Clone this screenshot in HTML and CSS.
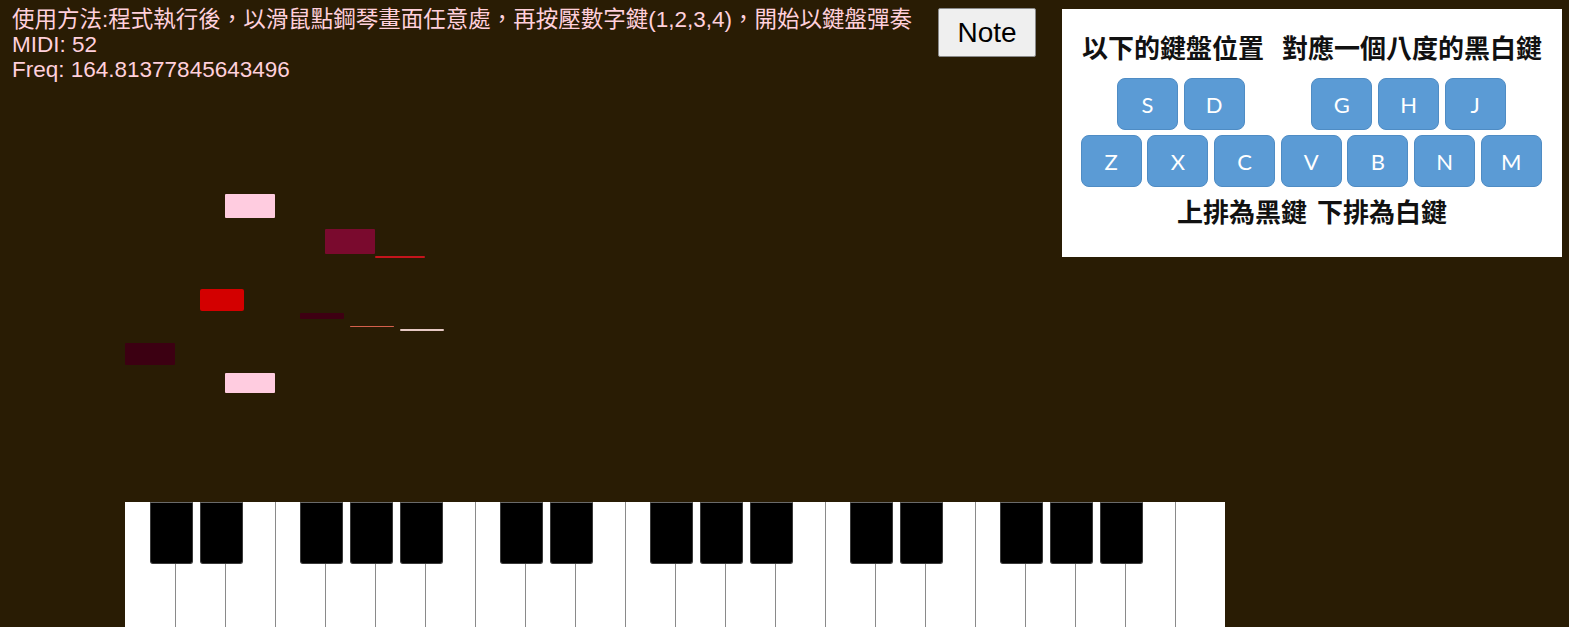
FILE: index.html
```html
<!DOCTYPE html>
<html lang="zh-TW">
<head>
<meta charset="utf-8">
<title>Piano</title>
<link rel="stylesheet" href="styles.css">
</head>
<body>
<div class="app">
  <div class="main">
    <div class="top">
      <div class="info" lang="zh-TW">
        <div class="line">使用方法:程式執行後，以滑鼠點鋼琴畫面任意處，再按壓數字鍵(1,2,3,4)，開始以鍵盤彈奏</div>
        <div class="line">MIDI: 52</div>
        <div class="line">Freq: 164.81377845643496</div>
      </div>
      <button class="note-btn" type="button">Note</button>
    </div>
    <div class="roll">
      <div class="note n1"></div>
      <div class="note n2"></div>
      <div class="note n3"></div>
      <div class="note n4"></div>
      <div class="note n5"></div>
      <div class="note n6"></div>
      <div class="note n7"></div>
      <div class="note n8"></div>
      <div class="note n9"></div>
    </div>
    <div class="piano">
      <div class="wk has-b"></div>
      <div class="wk has-b"></div>
      <div class="wk"></div>
      <div class="wk has-b"></div>
      <div class="wk has-b"></div>
      <div class="wk has-b"></div>
      <div class="wk"></div>
      <div class="wk has-b"></div>
      <div class="wk has-b"></div>
      <div class="wk"></div>
      <div class="wk has-b"></div>
      <div class="wk has-b"></div>
      <div class="wk has-b"></div>
      <div class="wk"></div>
      <div class="wk has-b"></div>
      <div class="wk has-b"></div>
      <div class="wk"></div>
      <div class="wk has-b"></div>
      <div class="wk has-b"></div>
      <div class="wk has-b"></div>
      <div class="wk"></div>
      <div class="wk"></div>
    </div>
  </div>
  <aside class="panel">
    <div class="panel-title">以下的鍵盤位置 對應一個八度的黑白鍵</div>
    <div class="krow krow-top">
      <div class="k">S</div>
      <div class="k">D</div>
      <div class="k k-gap">G</div>
      <div class="k">H</div>
      <div class="k">J</div>
    </div>
    <div class="krow krow-bottom">
      <div class="k">Z</div>
      <div class="k">X</div>
      <div class="k">C</div>
      <div class="k">V</div>
      <div class="k">B</div>
      <div class="k">N</div>
      <div class="k">M</div>
    </div>
    <div class="panel-foot">上排為黑鍵 下排為白鍵</div>
  </aside>
</div>
</body>
</html>
```
FILE: styles.css
```css
html, body {
  margin: 0;
  padding: 0;
  overflow: hidden;
}
body {
  background: #291c04;
  font-family: "Liberation Sans", "Noto Sans CJK TC", sans-serif;
}
.app {
  display: flex;
  height: 627px;
  overflow: hidden;
}
.main {
  width: 1062px;
  flex: none;
  display: flex;
  flex-direction: column;
}
.top {
  height: 81px;
  display: flex;
  justify-content: space-between;
  align-items: flex-start;
  flex: none;
}
.info {
  padding: 7px 0 0 12px;
  color: #ffd0dc;
  font-size: 22.5px;
  line-height: 25px;
  white-space: nowrap;
}
.note-btn {
  margin: 8px 26px 0 0;
  width: 98px;
  height: 49px;
  padding: 0;
  background: #efefef;
  border: 1px solid #8a8a8a;
  border-radius: 2px;
  font-family: "Liberation Sans", sans-serif;
  font-size: 28px;
  color: #000;
}
.roll {
  flex: 1;
  position: relative;
}
.note {
  position: absolute;
  border-radius: 1px;
}
.n1 { left: 225px; top: 113px; width: 50px; height: 24px; background: #ffcce0; }
.n2 { left: 325px; top: 148px; width: 50px; height: 25px; background: #7a0a2e; }
.n3 { left: 375px; top: 175px; width: 50px; height: 2px; background: #c4141c; }
.n4 { left: 200px; top: 208px; width: 44px; height: 22px; background: #d30000; border-radius: 2px; }
.n5 { left: 300px; top: 232px; width: 44px; height: 6px; background: #3e0012; }
.n6 { left: 350px; top: 245px; width: 44px; height: 1px; background: #d4604c; }
.n7 { left: 400px; top: 248px; width: 44px; height: 2px; background: #e6c8c4; }
.n8 { left: 125px; top: 262px; width: 50px; height: 22px; background: #3c0012; }
.n9 { left: 225px; top: 292px; width: 50px; height: 20px; background: #ffcce0; }

.piano {
  flex: none;
  height: 125px;
  width: 1100px;
  margin-left: 125px;
  display: flex;
  overflow: hidden;
}
.wk {
  position: relative;
  width: 50px;
  height: 140px;
  flex: none;
  box-sizing: border-box;
  background: #fff;
  border-left: 1.5px solid #8a8a8a;
}
.wk:first-child {
  border-left: none;
}
.has-b::after {
  content: "";
  position: absolute;
  z-index: 1;
  top: 0;
  left: 24px;
  width: 43px;
  height: 62px;
  background: #000;
  border: 1px solid #3a3a3a;
  border-top-color: #6a6a6a;
  box-sizing: border-box;
  border-radius: 1px 1px 3px 3px;
}
.wk:first-child.has-b::after {
  left: 25px;
}

.panel {
  flex: none;
  width: 500px;
  height: 248px;
  margin-top: 9px;
  background: #fff;
  box-sizing: border-box;
  padding-top: 23px;
  font-family: "Noto Sans CJK TC", "Noto Sans CJK SC", sans-serif;
}
.panel-title, .panel-foot {
  text-align: center;
  font-size: 26px;
  line-height: 30px;
  font-weight: 700;
  color: #111;
  word-spacing: 12px;
}
.panel-foot {
  margin-top: 9px;
  word-spacing: 4px;
}
.krow {
  display: flex;
  gap: 5.7px;
  height: 52px;
}
.krow-top {
  margin-top: 16px;
  padding-left: 55px;
}
.krow-bottom {
  margin-top: 5px;
  padding-left: 18.7px;
}
.k {
  width: 61px;
  height: 52px;
  flex: none;
  background: #5b9bd5;
  border: 1px solid #4f8cc4;
  box-sizing: border-box;
  border-radius: 8px;
  color: #fff;
  font-family: Lato, "Open Sans", sans-serif;
  font-size: 22px;
  display: flex;
  align-items: center;
  justify-content: center;
}
.k-gap {
  margin-left: 61px;
}
```
